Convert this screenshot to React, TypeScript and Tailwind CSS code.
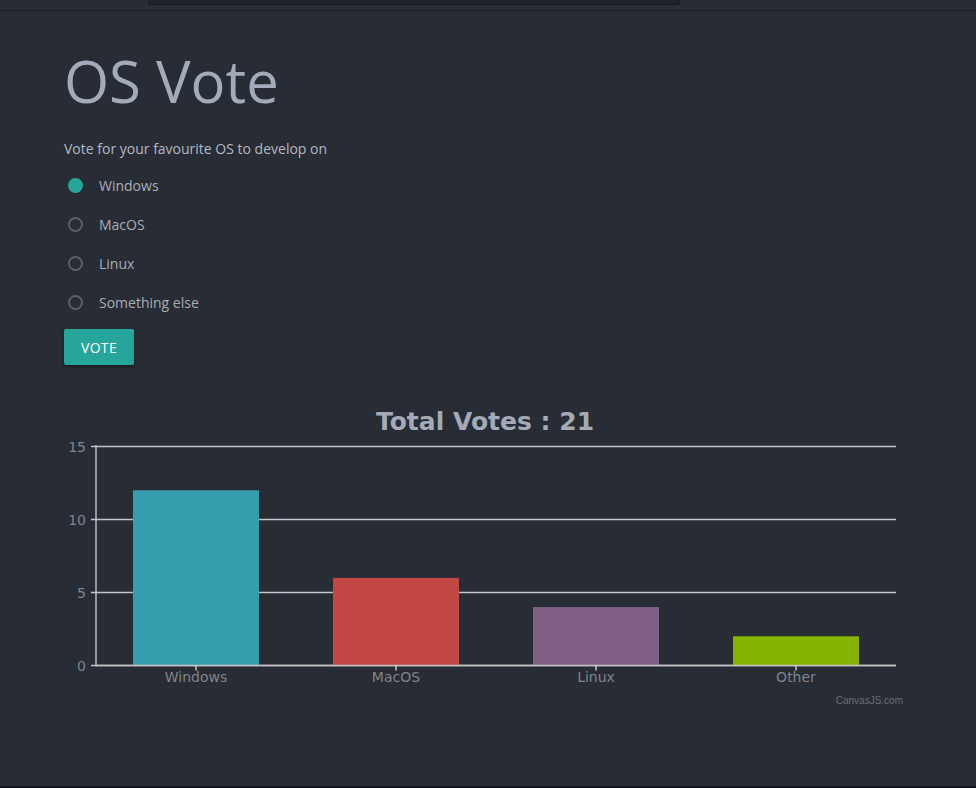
const options = ['Windows', 'MacOS', 'Linux', 'Something else'];

const bars = [
  { label: 'Windows', value: 12, color: '#369EAD' },
  { label: 'MacOS', value: 6, color: '#C24642' },
  { label: 'Linux', value: 4, color: '#7F6084' },
  { label: 'Other', value: 2, color: '#86B402' },
];

const chartFont = '"DejaVu Sans", Verdana, sans-serif';

function VoteChart() {
  const x0 = 96;
  const x1 = 896;
  const yZero = 665.5;
  const perUnit = 14.6;
  const slot = (x1 - x0) / bars.length;

  return (
    <svg width="976" height="320" viewBox="0 400 976 320" className="block">
      <text
        x="485"
        y="430"
        textAnchor="middle"
        fill="#a3aab8"
        fontFamily={chartFont}
        fontWeight="bold"
        fontSize="25"
      >
        Total Votes : 21
      </text>

      {/* grid + y labels */}
      {[0, 5, 10, 15].map((v) => {
        const y = yZero - v * perUnit;
        return (
          <g key={v}>
            <line x1={91} x2={x1} y1={y} y2={y} stroke="#c4c4c4" strokeWidth="1.4" />
            <text x="86" y={y + 5} textAnchor="end" fill="#80838a" fontFamily={chartFont} fontSize="14">
              {v}
            </text>
          </g>
        );
      })}

      {/* bars */}
      {bars.map((b, i) => {
        const cx = x0 + slot * i + slot / 2;
        const top = yZero - b.value * perUnit;
        return (
          <g key={b.label}>
            <rect x={cx - 63} y={top} width="126" height={yZero - top} fill={b.color} />
            <line x1={cx} x2={cx} y1={yZero} y2={yZero + 5} stroke="#c4c4c4" strokeWidth="1.6" />
            <text x={cx} y="682" textAnchor="middle" fill="#80838a" fontFamily={chartFont} fontSize="14">
              {b.label}
            </text>
          </g>
        );
      })}

      {/* axes */}
      <line x1={x0} x2={x0} y1={445} y2={yZero + 0.7} stroke="#c4c4c4" strokeWidth="1.4" />
      <line x1={x0} x2={x1} y1={yZero} y2={yZero} stroke="#c4c4c4" strokeWidth="1.4" />

      <text x="903" y="704" textAnchor="end" fill="#6b6e75" fontFamily='"Liberation Sans", Arial, sans-serif' fontSize="10">
        CanvasJS.com
      </text>
    </svg>
  );
}

export default function App() {
  return (
    <div
      className="relative h-[788px] overflow-hidden bg-[#282c34]"
      style={{ fontFamily: '"Open Sans", "Noto Sans", sans-serif' }}
    >
      {/* top strip */}
      <div className="h-[11px] border-b border-[#1b1e23]">
        <div className="ml-[148px] h-[5px] w-[532px] rounded-b-[3px] border border-t-0 border-[#17191e] bg-[#20232a]" />
      </div>

      <div className="px-[64px]">
        <h1 className="mt-[41px] text-[58px] leading-[58px] text-[#a3aab8]">OS Vote</h1>

        <p className="mt-[29px] text-[14px] leading-[20px] text-[#b3b8c2]">
          Vote for your favourite OS to develop on
        </p>

        <div className="mt-[7px] flex flex-col">
          {options.map((o, i) => (
            <label key={o} className="flex h-[39px] items-center">
              {i === 0 ? (
                <span className="ml-[4px] h-[15px] w-[15px] rounded-full bg-[#26a69a]" />
              ) : (
                <span className="ml-[4px] h-[15px] w-[15px] rounded-full border-2 border-[#5c5f64]" />
              )}
              <span className="ml-[16px] text-[14px] text-[#a7adb7]">{o}</span>
            </label>
          ))}
        </div>

        <button className="mt-[7px] h-[36px] w-[70px] rounded-[2px] bg-[#26a69a] text-[14px] tracking-[0.3px] text-white shadow-[0_2px_3px_rgba(0,0,0,0.35)]">
          VOTE
        </button>
      </div>

      <div className="mt-[35px]">
        <VoteChart />
      </div>

      <div className="absolute bottom-0 left-0 h-[2px] w-full bg-[#14161b]" />
    </div>
  );
}
